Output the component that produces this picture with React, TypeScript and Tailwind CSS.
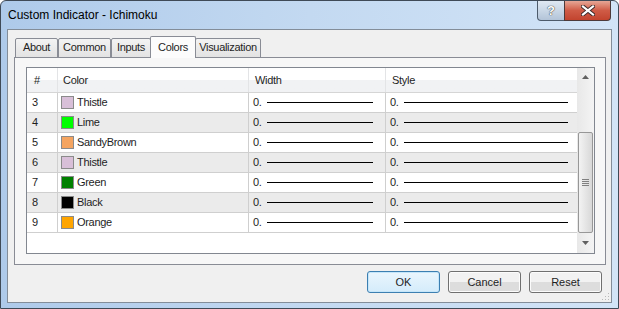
import React from 'react'

type Row = { n: number; name: string; color: string }

const rows: Row[] = [
    { n: 3, name: 'Thistle', color: '#d8bfd8' },
    { n: 4, name: 'Lime', color: '#00ff00' },
    { n: 5, name: 'SandyBrown', color: '#f4a460' },
    { n: 6, name: 'Thistle', color: '#d8bfd8' },
    { n: 7, name: 'Green', color: '#008000' },
    { n: 8, name: 'Black', color: '#000000' },
    { n: 9, name: 'Orange', color: '#ffa500' },
]

const tabs = [
    { label: 'About', w: 'w-[43px]' },
    { label: 'Common', w: 'w-[53px]' },
    { label: 'Inputs', w: 'w-[40px]' },
    { label: 'Colors', w: 'w-[46px]' },
    { label: 'Visualization', w: 'w-[66px]' },
]

const TitleButtons = () => (
    <div className="flex mr-[7px] h-[20px]">
        <div className="w-[28px] h-[20px] border border-t-0 border-[#4d5b6b] rounded-bl-[4px] bg-gradient-to-b from-[#dfe8f2] via-[#c9d7e6] to-[#b3c4d8] flex items-center justify-center">
            <span className="text-[13px] font-bold text-white leading-none [text-shadow:0_0_1px_#333,0_0_1px_#333]">?</span>
        </div>
        <div className="w-[47px] h-[20px] -ml-px border border-t-0 border-[#4d3a3a] rounded-br-[4px] bg-gradient-to-b from-[#e5a696] via-[#cf5b46] to-[#c2442e] flex items-center justify-center">
            <svg width="14" height="11" viewBox="0 0 14 11">
                <path d="M2 1.5 L12 9.5 M12 1.5 L2 9.5" stroke="#3b2a2a" strokeWidth="4" strokeLinecap="square" />
                <path d="M2 1.5 L12 9.5 M12 1.5 L2 9.5" stroke="#ffffff" strokeWidth="2.2" strokeLinecap="square" />
            </svg>
        </div>
    </div>
)

const StyleLine = ({ w }: { w: string }) => (
    <div className="flex items-center h-full pl-[4px]">
        <span>0.</span>
        <div className={`${w} h-px bg-black ml-[5px]`} />
    </div>
)

const Button = ({ label, def }: { label: string; def?: boolean }) => (
    <div
        className={
            def
                ? 'w-[73px] h-[22px] rounded-[3px] border border-[#3c7fb1] bg-gradient-to-b from-[#eaf6fd] to-[#d4ecfb] shadow-[inset_0_0_0_1px_#c5e6fa] flex items-center justify-center'
                : 'w-[73px] h-[22px] rounded-[3px] border border-[#707070] bg-gradient-to-b from-[#f2f2f2] from-50% to-[#dddddd] to-50% shadow-[inset_0_0_0_1px_#fcfcfc] flex items-center justify-center'
        }
    >
        {label}
    </div>
)

export default function App() {
    return (
        <div
            className="w-[619px] h-[309px] flex flex-col border border-[#3f4a57] rounded-t-[6px] bg-gradient-to-r from-[#aecaea] via-[#c3d9f1] to-[#d2e4f7] text-[#1e1e1e] overflow-hidden"
            style={{ fontFamily: '"Liberation Sans", Arial, sans-serif' }}
        >
            <div className="h-[28px] flex justify-between items-start shrink-0">
                <div className="pl-[7px] pt-[7px] text-[12px] leading-[14px] text-black">Custom Indicator - Ichimoku</div>
                <TitleButtons />
            </div>

            <div className="flex-1 mx-[6px] mb-[6px] border border-[#838d99] bg-[#f0f0f0] flex flex-col text-[11px] tracking-[-0.3px]">
                <div className="ml-[6px] mr-[5px] mt-[6px] flex flex-col">
                    <div className="flex items-end h-[22px] pl-[1px] -mb-px">
                        {tabs.map((t) =>
                            t.label === 'Colors' ? (
                                <div
                                    key={t.label}
                                    className={`${t.w} h-[22px] relative z-10 border border-b-0 border-[#898c95] bg-[#fcfcfc] flex items-center justify-center -mx-px rounded-t-[2px]`}
                                >
                                    {t.label}
                                </div>
                            ) : (
                                <div
                                    key={t.label}
                                    className={`${t.w} h-[20px] border border-[#898c95] bg-gradient-to-b from-[#f3f3f3] to-[#e3e3e3] flex items-center justify-center rounded-t-[2px] pb-[1px]`}
                                >
                                    {t.label}
                                </div>
                            )
                        )}
                    </div>
                    <div className="h-[208px] border border-[#898c95] bg-[#f7f7f7] pl-[11px] pt-[9px] pr-[10px] pb-[10px]">
                        <div className="h-full border border-[#828790] bg-white flex">
                            <div className="flex-1 flex flex-col">
                                <div className="h-[25px] flex border-b border-[#d5d5d5] bg-gradient-to-b from-white from-50% to-[#f1f2f4] to-50%">
                                    <div className="w-[31px] border-r border-[#e3e4e6] pl-[7px] flex items-center">#</div>
                                    <div className="w-[191px] border-r border-[#e3e4e6] pl-[5px] flex items-center">Color</div>
                                    <div className="w-[137px] border-r border-[#e3e4e6] pl-[6px] flex items-center">Width</div>
                                    <div className="flex-1 pl-[6px] flex items-center">Style</div>
                                </div>
                                {rows.map((r, i) => (
                                    <div
                                        key={r.n}
                                        className={`h-[20px] flex border-b border-[#cfcfcf] ${i % 2 === 1 ? 'bg-[#ebebeb]' : 'bg-white'}`}
                                    >
                                        <div className="w-[31px] border-r border-[#cfcfcf] pl-[5px] flex items-center">{r.n}</div>
                                        <div className="w-[191px] border-r border-[#cfcfcf] pl-[3px] flex items-center">
                                            <div
                                                className="w-[13px] h-[13px] border border-[#8a8a8a]"
                                                style={{ backgroundColor: r.color }}
                                            />
                                            <span className="ml-[3px]">{r.name}</span>
                                        </div>
                                        <div className="w-[137px] border-r border-[#cfcfcf]">
                                            <StyleLine w="w-[106px]" />
                                        </div>
                                        <div className="flex-1">
                                            <StyleLine w="w-[164px]" />
                                        </div>
                                    </div>
                                ))}
                            </div>
                            <div className="w-[17px] bg-gradient-to-r from-[#e8e8e8] to-[#f4f4f4] flex flex-col">
                                <div className="h-[17px] flex items-center justify-center">
                                    <svg width="7" height="4" viewBox="0 0 7 4">
                                        <path d="M3.5 0 L7 4 L0 4 Z" fill="#606060" />
                                    </svg>
                                </div>
                                <div className="h-[47px]" />
                                <div className="h-[101px] mx-[1px] border border-[#979797] rounded-[2px] bg-gradient-to-r from-[#f3f3f3] to-[#d8d8d8] flex flex-col items-center justify-center gap-[1px]">
                                    <div className="w-[7px] h-px bg-[#808080]" />
                                    <div className="w-[7px] h-px bg-[#808080]" />
                                    <div className="w-[7px] h-px bg-[#808080]" />
                                    <div className="w-[7px] h-px bg-[#808080]" />
                                </div>
                                <div className="flex-1 flex items-center justify-center">
                                    <svg width="7" height="4" viewBox="0 0 7 4">
                                        <path d="M0 0 L7 0 L3.5 4 Z" fill="#606060" />
                                    </svg>
                                </div>
                            </div>
                        </div>
                    </div>
                </div>

                <div className="flex justify-end gap-[8px] mt-[6px] pr-[9px] tracking-normal">
                    <Button label="OK" def />
                    <Button label="Cancel" />
                    <Button label="Reset" />
                </div>
                <div className="flex justify-end pr-[1px] mt-auto pb-[1px]">
                    <svg width="8" height="8" viewBox="0 0 8 8">
                        <rect x="6" y="0" width="1" height="1" fill="#b8b8b8" />
                        <rect x="3" y="3" width="1" height="1" fill="#b8b8b8" />
                        <rect x="6" y="3" width="1" height="1" fill="#b8b8b8" />
                        <rect x="0" y="6" width="1" height="1" fill="#b8b8b8" />
                        <rect x="3" y="6" width="1" height="1" fill="#b8b8b8" />
                        <rect x="6" y="6" width="1" height="1" fill="#b8b8b8" />
                    </svg>
                </div>
            </div>
        </div>
    )
}
